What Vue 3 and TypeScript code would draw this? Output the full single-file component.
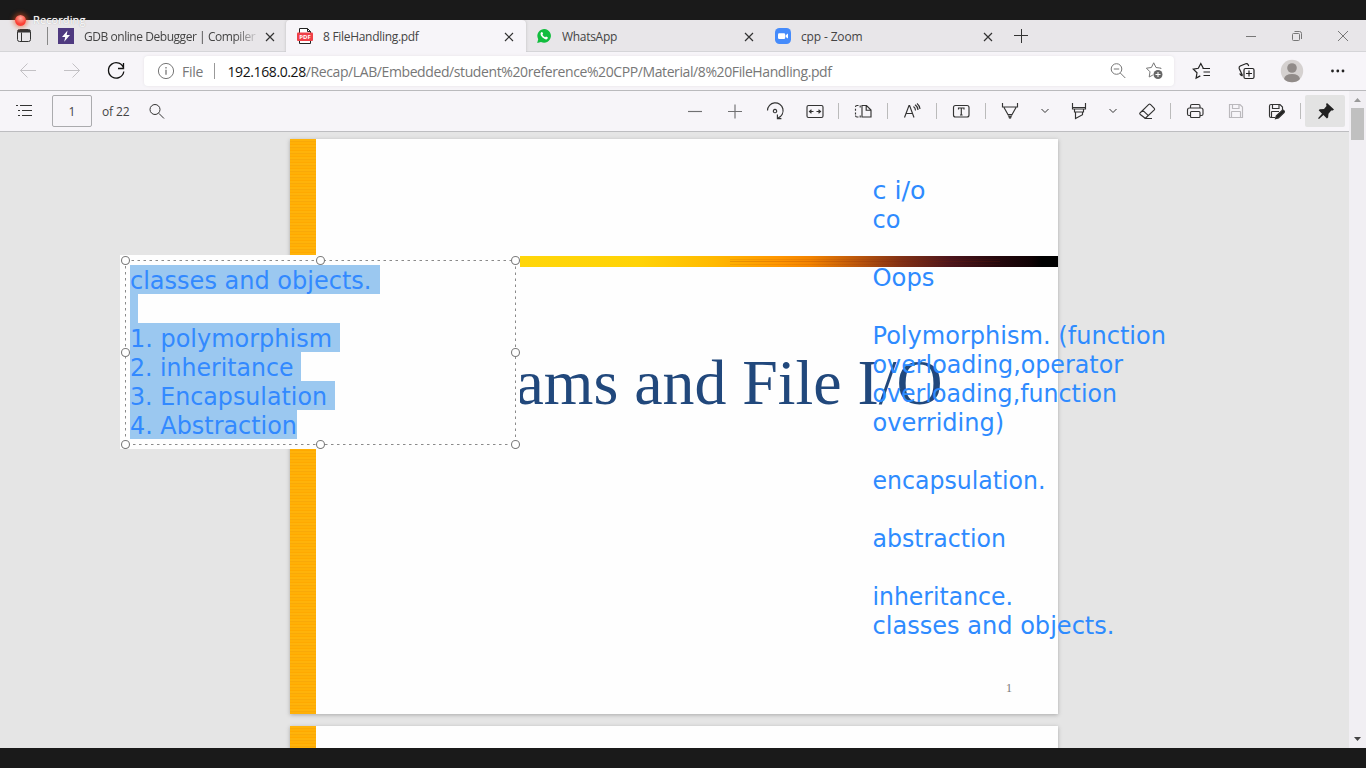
<script setup lang="ts">
interface Tool {
  kind: 'btn' | 'sep' | 'chev'
  wide?: boolean
  icon?: string
  tone?: string
}

interface Line {
  text: string
  y: number
  width: number
}

const tools: Tool[] = [
  { kind: 'btn', icon: 'minus', tone: 'soft' },
  { kind: 'btn', icon: 'plus', tone: 'soft' },
  { kind: 'btn', icon: 'rotate' },
  { kind: 'btn', icon: 'fit' },
  { kind: 'sep' },
  { kind: 'btn', icon: 'pages', wide: true },
  { kind: 'sep' },
  { kind: 'btn', icon: 'read', wide: true },
  { kind: 'sep' },
  { kind: 'btn', icon: 'text', wide: true },
  { kind: 'sep' },
  { kind: 'btn', icon: 'pen', wide: true },
  { kind: 'chev' },
  { kind: 'btn', icon: 'marker' },
  { kind: 'chev' },
  { kind: 'btn', icon: 'eraser' },
  { kind: 'sep' },
  { kind: 'btn', icon: 'print', wide: true },
  { kind: 'btn', icon: 'save', tone: 'faint' },
  { kind: 'btn', icon: 'saveas' },
  { kind: 'sep', wide: true },
]

const icons: Record<string, string> = {
  minus: 'M5 12.5h14',
  plus: 'M5 12.5h14M12 5.5v14',
  rotate:
    'M4.500 11.500A7.800 7.800 0 1 1 15.200 18.900M14.400 15.600v4h4M12 10.400a1.700 1.700 0 1 0 .01 0',
  fit: 'M5.5 6.5h13q1.5 0 1.5 1.5v9q0 1.500-1.500 1.500h-13q-1.500 0-1.500-1.500v-9q0-1.500 1.500-1.500zM6.500 12.500h4M8.500 10.700l-2 1.800 2 1.800M17.500 12.500h-4M15.500 10.700l2 1.800-2 1.800',
  pages:
    'M7.500 6.500h-1.500q-1.500 0-1.500 1.500M4.500 9.700v2M4.500 13.500v2M4.500 16.500q0 1.500 1.500 1.500h1.500M9.200 6.500v2M9.200 16.500v2M11 6.500h4.500l4.500 4.500v7h-9zM15.200 6.500v4.700h4.800',
  read: 'M4.500 18.500L9 6.500h.6L14 18.500M6 14.500h6.500M13.500 7.500q2 1.500 2 4M15 5.800q3 2 3 5.200M17 4.500q3 2.500 3 5.500',
  text: 'M6.500 6.500h11.500q2 0 2 2v7.500q0 2-2 2h-11.500q-2 0-2-2v-7.500q0-2 2-2zM9.500 10.500v-1.500h5.500v1.500M12.300 9v7M11 16h2.600',
  pen: 'M4.500 4v4h15v-4M6 8.500l4.500 8M18 8.500l-4.500 8M9.500 15.500h5M10.800 17.500h2.400M11.500 19h1',
  marker: 'M5.500 4v6h13v-6M5.500 8.500h13M7.500 10.500v2.500h9v-2.500M8.500 13v6.500l7-3.800v-2.700',
  eraser:
    'M5 14l8.800-8.600q.8-.7 1.600 0l3.900 3.900q.7.8 0 1.600L11.200 18.500q-1 .8-2 0L5 15.200q-.6-.6 0-1.200zM7.800 11.400l5.600 5.200M9.500 19.500h7.500',
  print:
    'M7.500 8.500v-1.500q0-1.500 1.500-1.500h6.500q1.500 0 1.500 1.500v1.500M7.500 16.500h-1.500q-1.500 0-1.500-1.500v-4q0-2 2-2h11.500q2 0 2 2v4q0 1.500-1.500 1.500h-1.500M8.500 12.500h7.500q1 0 1 1v4q0 1-1 1h-7.500q-1 0-1-1v-4q0-1 1-1z',
  save: 'M5.500 5.500h10.500l2.500 2.500v10.500h-13zM8.500 5.500v4h6.500v-4M7.500 18.500v-5.500q0-.5.500-.5h8q.5 0 .5.500v5.500',
  saveas: 'M11 18.500h-4q-1.500 0-1.500-1.500v-10q0-1.500 1.500-1.500h9l2.500 2.500v3M8.500 5.500v4h6.500v-4M7.500 18.500v-5.500q0-.5.500-.5h7',
}

const notes: Line[] = [
  { text: 'c i/o', y: 199, width: 53 },
  { text: 'co', y: 228, width: 28 },
  { text: 'Oops', y: 286, width: 62 },
  { text: 'Polymorphism. (function', y: 344, width: 293.500 },
  { text: 'overloading,operator', y: 373, width: 250.500 },
  { text: 'overloading,function', y: 402, width: 244.500 },
  { text: 'overriding)', y: 431, width: 131.700 },
  { text: 'encapsulation.', y: 489, width: 173 },
  { text: 'abstraction', y: 547, width: 133.500 },
  { text: 'inheritance.', y: 605, width: 140.500 },
  { text: 'classes and objects.', y: 634, width: 242 },
]

const selected: (Line & { mark: number })[] = [
  { text: 'classes and objects.', y: 10, width: 241.500, mark: 250 },
  { text: '', y: 39, width: 0, mark: 8 },
  { text: '1. polymorphism', y: 68, width: 202, mark: 210 },
  { text: '2. inheritance', y: 97, width: 163.500, mark: 171 },
  { text: '3. Encapsulation', y: 126, width: 197, mark: 205 },
  { text: '4. Abstraction', y: 155, width: 167, mark: 167 },
]

const handles: [number, number][] = [
  [5.5, 5.5], [200.5, 5.5], [395.5, 5.5],
  [5.5, 97.5], [395.5, 97.5],
  [5.5, 189.5], [200.5, 189.5], [395.5, 189.5],
]
</script>

<template>
  <div class="screen">
    <div class="band"></div>

    <header class="tabs">
      <div class="lead">
        <svg width="16" height="16" viewBox="0 0 16 16"><rect x="1.500" y="1.500" width="13" height="12" rx="2" fill="none" stroke="#333"/><path d="M2 2h12v2.500H2z" fill="#333"/><path d="M5.500 4.500v9" stroke="#333"/></svg>
      </div>
      <div class="tab first">
        <svg class="fav" width="16" height="16" viewBox="0 0 16 16"><path d="M0 0h16v16H0z" fill="#4f3a80"/><path d="M9.500 2.500L4 9h3.200l-1 4.700L12 7H8.700z" fill="#fff"/></svg>
        <span class="label fade t1">GDB online Debugger | Compiler</span>
        <svg class="x" width="10" height="10" viewBox="0 0 10 10"><path d="M1 1l8 8M9 1L1 9"/></svg>
      </div>
      <div class="tab active">
        <svg class="fav" width="16" height="16" viewBox="0 0 16 16"><path d="M2.500 15.500V.5h8l3 3v12z" fill="#fff" stroke="#222"/><path d="M10.500.5v3h3" fill="none" stroke="#222"/><rect x="0" y="4.500" width="16" height="8.500" rx="1" fill="#f04048"/><text x="8" y="11.300" text-anchor="middle" class="pdf">PDF</text></svg>
        <span class="label t2">8 FileHandling.pdf</span>
        <svg class="x" width="10" height="10" viewBox="0 0 10 10"><path d="M1 1l8 8M9 1L1 9"/></svg>
      </div>
      <div class="tab third">
        <svg class="fav" width="16" height="16" viewBox="0 0 16 16"><path d="M1.200 15l1-3.800A6.800 6.800 0 1 1 5 13.900z" fill="#12bd3e"/><path d="M5.300 4.300q.8-.8 1.300.3l.5 1.200-.7 1q1 1.800 2.700 2.500l.9-.9 1.800.9q.2 1.700-1.500 2.100-1.600.2-3.800-1.800Q4.300 7.300 4.500 5.700q.2-.9.8-1.400z" fill="#fff"/></svg>
        <span class="label t3">WhatsApp</span>
        <svg class="x" width="10" height="10" viewBox="0 0 10 10"><path d="M1 1l8 8M9 1L1 9"/></svg>
      </div>
      <div class="tab fourth">
        <svg class="fav" width="16" height="16" viewBox="0 0 16 16"><rect width="16" height="16" rx="4.500" fill="#458bfb"/><rect x="3" y="5.200" width="7.200" height="5.800" rx="1.300" fill="#fff"/><path d="M10.700 7.300L13 5.600v5l-2.300-1.700z" fill="#fff"/></svg>
        <span class="label t4">cpp - Zoom</span>
        <svg class="x" width="10" height="10" viewBox="0 0 10 10"><path d="M1 1l8 8M9 1L1 9"/></svg>
      </div>
      <svg class="newtab" width="14" height="14" viewBox="0 0 14 14"><path d="M0 6.500h14M7.500 0v14" stroke="#333"/></svg>
      <div class="win">
        <svg width="12" height="12" viewBox="0 0 12 12"><path d="M1 6.500h10"/></svg>
        <svg width="12" height="12" viewBox="0 0 12 12"><path d="M3.500 1.500h5q2 0 2 2v5.500M1.500 4.500q0-1 1-1h5q1 0 1 1v5q0 1-1 1h-5q-1 0-1-1z"/></svg>
        <svg width="12" height="12" viewBox="0 0 12 12"><path d="M1 1l10 10M11 1L1 11"/></svg>
      </div>
    </header>

    <div class="nav">
      <div class="navbtns">
        <svg class="dim" width="24" height="24" viewBox="0 0 24 24"><path d="M20 11.500H4.500M11.500 4.500l-7 7 7 7"/></svg>
        <svg class="dim" width="24" height="24" viewBox="0 0 24 24"><path d="M4 11.500h15.500M12.500 4.500l7 7-7 7"/></svg>
        <svg width="24" height="24" viewBox="0 0 24 24"><path d="M19.700 9.700A7.700 7.700 0 1 0 19.800 12.500M19.500 4v5.500h-5.500" stroke="#111" stroke-width="1.300"/></svg>
      </div>
      <div class="address">
        <svg width="18" height="18" viewBox="0 0 18 18"><circle cx="9" cy="9" r="7.600"/><path d="M9 7.800v5M9 5v1.400" stroke-width="1.300"/></svg>
        <span class="file">File</span>
        <i class="rule"></i>
        <span class="url"><b>192.168.0.28</b>/Recap/LAB/Embedded/student%20reference%20CPP/Material/8%20FileHandling.pdf</span>
        <svg class="mag" width="18" height="18" viewBox="0 0 18 18"><circle cx="7.500" cy="7" r="5.300"/><path d="M11.300 11l5 5M4.800 7h5.400"/></svg>
        <svg class="star" width="20" height="20" viewBox="0 0 20 20"><path d="M16.800 8l.2-.8-5-.7-2.300-4.700-2.300 4.700-5 .7 3.600 3.600-.8 5.200 3.700-2"/><circle cx="14" cy="13.500" r="4.500" fill="#666" stroke="none"/><path d="M11.500 13.500h5M14 11v5" stroke="#fff"/></svg>
      </div>
      <div class="browser">
        <svg width="24" height="24" viewBox="0 0 24 24"><path stroke-width="1.200" d="M15 9.500l-1.700-.2-2.500-4.800-2.500 4.800-5 .8 3.700 3.700-.9 5.300 4.200-2.200M12.500 9.500h7.500M13.500 13h6.500M13.500 16.500h6.500"/></svg>
        <svg width="24" height="24" viewBox="0 0 24 24"><path stroke-width="1.200" d="M7.500 16.500l-3.300-7q-.5-1.800 1-2.500l5.500-2.300q1.600-.5 2.500 1l.5 1.300M7.500 17q-2-.7-2.800-2.500M10.500 9.500h7q1.500 0 1.500 1.500v7q0 1.500-1.500 1.500h-7q-1.500 0-1.500-1.500v-7q0-1.500 1.500-1.500zM11 14.500h6M14 11.500v6"/></svg>
        <svg width="24" height="24" viewBox="0 0 24 24"><circle cx="12" cy="12" r="11.200" fill="#d5d1d0" stroke="none"/><circle cx="12" cy="9" r="4.800" fill="#918b89" stroke="none"/><path d="M4 20q1-5 8-5t8 5q-3 3.200-8 3.200T4 20z" fill="#918b89" stroke="none"/></svg>
        <svg width="24" height="24" viewBox="0 0 24 24"><g fill="#222" stroke="none"><circle cx="7.500" cy="12" r="1.400"/><circle cx="12.800" cy="12" r="1.400"/><circle cx="18" cy="12" r="1.400"/></g></svg>
      </div>
    </div>

    <div class="viewer">
      <div class="main">
        <div class="pdfbar">
          <svg class="toc" width="18" height="14" viewBox="0 0 18 14"><path d="M4 1.500h12M6 6.500h10M6 11.500h10M0 1.500h2M2 6.500h2M2 11.500h2"/></svg>
          <div class="pageno">1</div>
          <span class="of">of 22</span>
          <svg class="find" width="18" height="18" viewBox="0 0 18 18"><circle cx="7" cy="7.500" r="5"/><path d="M10.800 11.300l5.200 5.200"/></svg>
          <div class="tools">
            <div v-for="(t, i) in tools" :key="i" :class="[t.kind, t.tone, { wide: t.wide }]">
              <svg v-if="t.kind === 'btn'" width="24" height="24" viewBox="0 0 24 24">
                <path :d="icons[t.icon!]"/>
                <path v-if="t.icon === 'saveas'" d="M11.500 19.700l.8-3 6-5.400q1-.5 1.800.5t0 1.800l-5.600 5.300z" fill="#222"/>
                <path v-if="t.icon === 'pen'" d="M10 16.500h4l-1 3h-2z" fill="#444" stroke="none"/>
              </svg>
              <svg v-else-if="t.kind === 'chev'" width="10" height="6" viewBox="0 0 10 6"><path d="M1.500 1L5 4.500 8.500 1"/></svg>
            </div>
            <div class="pin">
              <svg width="24" height="24" viewBox="0 0 24 24"><path d="M14 4l7 6.500-1.200 1-1.600-.1-2.700 3.300-.4 3.800-1.200 1-3.500-3.500L6 20l-1-.7 4-4.600-3.300-3.400 1-1 4.300-.3 2.500-3-.4-2z" fill="#222" stroke="none"/></svg>
            </div>
          </div>
        </div>

        <div class="canvas">
          <section class="page">
            <div class="strip"></div>
            <div class="flame"></div>
            <svg class="title" width="430" height="70" viewBox="0 0 430 70">
              <text x="-4.500" y="55.500" textLength="427" lengthAdjust="spacingAndGlyphs">ams and File I/O</text>
            </svg>
            <span class="folio">1</span>
          </section>
          <section class="page next"><div class="strip"></div></section>
        </div>
      </div>

      <div class="scroll">
        <svg width="17" height="17" viewBox="0 0 17 17"><path d="M5 11l3.500-4 3.500 4z" fill="#999"/></svg>
        <div class="thumb"></div>
        <svg class="down" width="17" height="17" viewBox="0 0 17 17"><path d="M5 6h7l-3.500 4z" fill="#444"/></svg>
      </div>
    </div>

    <div class="band"></div>

    <svg class="notes" width="1366" height="768" viewBox="0 0 1366 768">
      <text v-for="n in notes" :key="n.y" x="872.500" :y="n.y" :textLength="n.width" lengthAdjust="spacingAndGlyphs">{{ n.text }}</text>
    </svg>

    <svg class="editbox" width="401" height="194" viewBox="0 0 401 194">
      <rect width="400" height="194" fill="#fefefe"/>
      <rect v-for="s in selected" :key="s.y" x="10" :y="s.y" :width="s.mark" height="29" fill="#9bc8f0" shape-rendering="crispEdges"/>
      <template v-for="s in selected" :key="s.y">
        <text v-if="s.text" x="10" :y="s.y + 24" :textLength="s.width" lengthAdjust="spacingAndGlyphs">{{ s.text }}</text>
      </template>
      <rect x="5.500" y="5.500" width="390" height="184" fill="none" stroke="#8a8a8a" stroke-dasharray="2.500 3.500"/>
      <circle v-for="(h, i) in handles" :key="i" :cx="h[0]" :cy="h[1]" r="4" fill="#fff" stroke="#7c7c7c" stroke-width="1.100"/>
    </svg>

    <div class="recording"><i></i><span>Recording</span></div>
  </div>
</template>

<style>
body { margin: 0; overflow: hidden; }
</style>

<style scoped>
.screen {
  position: relative;
  width: 1366px;
  height: 768px;
  overflow: hidden;
  display: flex;
  flex-direction: column;
  background: #f7f5f9;
  font-family: "Open Sans", "Noto Sans", sans-serif;
  font-size: 12px;
  color: #444;
}
svg { display: block; flex: none; }
.band { height: 20px; background: #1a1a1a; flex: none; }

.tabs { height: 32px; display: flex; align-items: center; background: #e8e6e9; box-shadow: inset 0 -1px #d5d5d8; flex: none; }
.lead { width: 48px; height: 18px; box-sizing: border-box; padding: 1px 0 0 16px; border-right: 1px solid #888; }
.tab { height: 32px; box-sizing: border-box; display: flex; align-items: center; padding-right: 12px; }
.tab .fav { margin-right: 10px; }
.first { width: 238px; padding-left: 10px; padding-right: 11px; }
.active { width: 240px; padding-left: 11px; background: #f7f5f9; border-radius: 4px 4px 0 0; box-shadow: 0 0 3px #bbb; clip-path: inset(0 -4px 0 -4px); }
.third { width: 239px; padding-left: 10px; padding-right: 11px; }
.fourth { width: 239px; padding-left: 10px; padding-right: 11px; }
.label { flex: 1; white-space: nowrap; overflow: hidden; line-height: 18px; padding-top: 1px; }
.t1 { letter-spacing: -0.450px; margin-right: 8px; }
.t2 { letter-spacing: -0.300px; }
.t3 { letter-spacing: -0.300px; }
.t4 { letter-spacing: -0.150px; }
.fade { -webkit-mask-image: linear-gradient(90deg, #000 87%, transparent 102%); mask-image: linear-gradient(90deg, #000 87%, transparent 102%); }
.x { margin-top: 1px; }
.x path { stroke: #333; stroke-width: 1.200; }
.pdf { font: bold 6px "Open Sans", sans-serif; fill: #fff; }
.newtab { margin-left: 10px; }
.win { margin-left: auto; padding-right: 17px; display: flex; gap: 34px; }
.win path { fill: none; stroke: #777; }

.nav { height: 38px; display: flex; align-items: center; flex: none; border-bottom: 1px solid #bababd; }
.nav svg { fill: none; stroke: #222; }
.navbtns { width: 144px; box-sizing: border-box; padding-left: 16px; display: flex; gap: 20px; }
.navbtns .dim { stroke: #c3c1c5; }
.address { width: 1030px; height: 30px; box-sizing: border-box; padding-left: 13px; display: flex; align-items: center; background: #fff; border-radius: 4px; box-shadow: 0 0 3px #e4e2e6; font-size: 14px; color: #777; white-space: nowrap; }
.address svg { stroke: #777; }
.file { width: 20px; margin-left: 7px; letter-spacing: -0.300px; }
.rule { width: 1px; height: 16px; background: #999; margin: 0 12px; }
.url { flex: 1; padding-left: .5px; letter-spacing: -0.400px; }
.url b { font-weight: 400; color: #111; }
.star { margin: 0 10px 0 17px; }
.browser { display: flex; padding-left: 16px; gap: 21px; }

.viewer { flex: 1; display: flex; min-height: 0; }
.main { width: 1349px; display: flex; flex-direction: column; }
.pdfbar { height: 40px; display: flex; align-items: center; border-bottom: 1px solid #bdbdc0; flex: none; }
.pdfbar svg { fill: none; stroke: #333; }
.toc { margin-left: 16px; }
.pageno { width: 38px; height: 30px; line-height: 31px; margin-left: 18px; border: 1px solid #ababae; border-radius: 2px; text-align: center; font-size: 12px; }
.of { width: 36px; margin-left: 10px; font-size: 12px; letter-spacing: -0.100px; white-space: nowrap; }
.find { margin-left: 10px; }
.tools { margin-left: auto; padding-right: 4px; display: flex; align-items: center; }
.btn { width: 40px; display: flex; justify-content: center; }
.btn.wide { width: 41px; }
.btn svg { margin-left: -0.500px; stroke-width: 1.150; }
.btn:not(.wide) svg { margin-left: 0; }
.pdfbar .soft svg { stroke: #707072; }
.pdfbar .faint svg { stroke: #bbb9bd; }
.sep { width: 8px; height: 16px; background: linear-gradient(#bbb, #bbb) 3px 0 / 1px 100% no-repeat; }
.sep.wide { width: 9px; background-position: 4px 0; }
.chev { width: 28px; display: flex; justify-content: center; }
.pin { width: 40px; height: 32px; display: flex; align-items: center; justify-content: center; background: #e3e3e3; border-radius: 2px; }

.canvas { flex: 1; min-height: 0; overflow: hidden; background: #e5e5e5; padding: 7px 0 0 290px; display: flex; flex-direction: column; gap: 12px; }
.page { position: relative; width: 768px; height: 575px; flex: none; background: #fefefe; box-shadow: 0 1px 4px #aaa; }
.strip { width: 26px; height: 100%; background: repeating-linear-gradient(#ffb30a 0 2px, #f9a908 2px 3px, #ffb006 3px 5px, #ffa900 5px 6px); }
.flame { position: absolute; left: 230px; top: 117px; width: 538px; height: 11px; background: linear-gradient(transparent 0 3px, #80200018 3px 4px, transparent 4px 5px, #80200030 5px 6px, transparent 6px 8px, #80200018 8px 9px, transparent 9px) 210px 0 / 270px 11px no-repeat, linear-gradient(90deg, #ffd60a 0, #ffd306 22%, #ffb900 36%, #ff9600 48%, #f28300 54%, #b9550c 63%, #803016 71%, #4c151b 80%, #24070c 89%, #100204 95%, #000 97%); }
.title { position: absolute; left: 230px; top: 209px; }
.title text { font: 64px "Liberation Serif", serif; fill: #21487c; }
.folio { position: absolute; right: 46px; bottom: 18px; font: 12px "Liberation Serif", serif; color: #777; }

.scroll { width: 17px; background: #f1eff3; display: flex; flex-direction: column; align-items: center; }
.thumb { width: 13px; height: 32px; background: #c0c0c0; }
.down { margin-top: auto; }

.notes { position: absolute; left: 0; top: 0; pointer-events: none; }
.notes text, .editbox text { font: 24px "DejaVu Sans", Verdana, sans-serif; fill: #2e8bff; }
.editbox { position: absolute; left: 120px; top: 255px; }
.editbox text { fill: #3289ff; }

.recording { position: absolute; left: 15px; top: 12px; height: 16px; display: flex; align-items: center; gap: 7px; color: #fff; font-size: 11px; letter-spacing: 0.100px; text-shadow: 0 0 1px #999; }
.recording span { margin-top: -1px; }
.recording i { width: 11px; height: 11px; border-radius: 50%; background: radial-gradient(circle at 50% 30%, #ffb0a0, #fb4035 60%); box-shadow: 0 0 4px 2px #e8501880; }
</style>
